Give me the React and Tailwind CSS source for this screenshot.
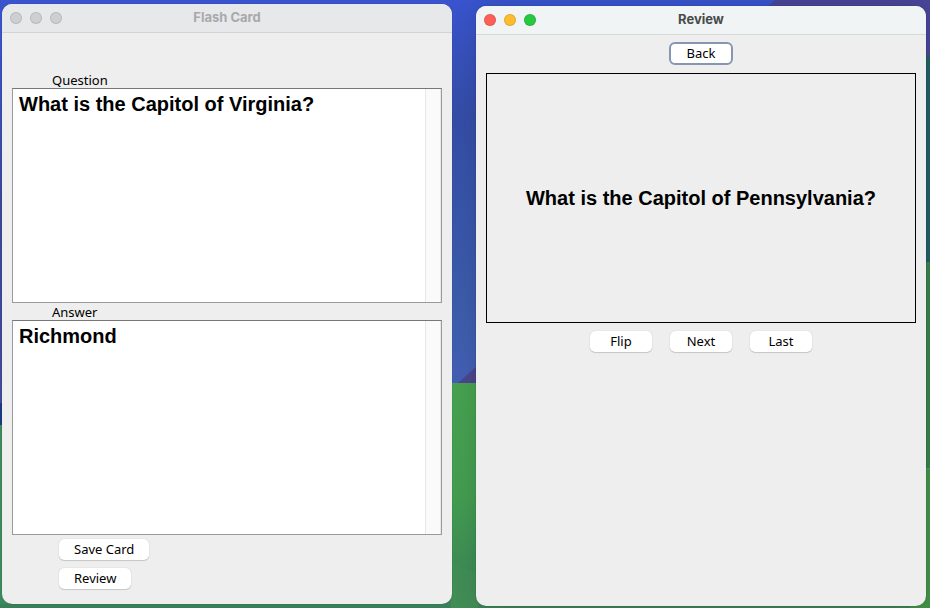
import React from "react";

function Wallpaper() {
  return (
    <svg
      aria-hidden="true"
      className="absolute inset-0 -z-10 h-full w-full"
      viewBox="0 0 930 608"
      preserveAspectRatio="none"
    >
      <defs>
        <linearGradient id="sky" x1="0" y1="0" x2="0" y2="1">
          <stop offset="0" stopColor="#3954ce" />
          <stop offset="0.3" stopColor="#344da6" />
          <stop offset="0.8" stopColor="#3c5caa" />
          <stop offset="1" stopColor="#435fb4" />
        </linearGradient>
        <linearGradient id="edge" x1="0" y1="0" x2="0" y2="1">
          <stop offset="0" stopColor="#3954ce" />
          <stop offset="0.5" stopColor="#3a479b" />
          <stop offset="1" stopColor="#45499a" />
        </linearGradient>
        <linearGradient id="grass" x1="0" y1="0" x2="0" y2="1">
          <stop offset="0" stopColor="#46a150" />
          <stop offset="0.5" stopColor="#439c50" />
          <stop offset="1" stopColor="#3b8257" />
        </linearGradient>
      </defs>
      <rect width="930" height="383" fill="url(#sky)" />
      <rect y="10" width="20" height="393" fill="url(#edge)" />
      <path d="M0 403H20V425H0Z" fill="#1b3a82" />
      <path d="M775 0H930V56H715Z" fill="#494598" />
      <path d="M458 383L477 366V383Z" fill="#4b458c" />
      <rect x="20" y="383" width="910" height="225" fill="url(#grass)" />
      <rect y="425" width="20" height="183" fill="#3b8a5d" />
      <path d="M451 562L478 574V608H451Z" fill="#418d56" />
      <path d="M910 55H930V262H910Z" fill="#235f63" />
      <path d="M910 262H930V468H910Z" fill="#38804f" />
      <path d="M910 465L930 470V608H910Z" fill="#429148" />
      <path d="M0 604H450V608H0Z" fill="#38805a" />
    </svg>
  );
}

function TitleBar({ title, active }) {
  const tones = active
    ? ["bg-[#fe5f57]", "bg-[#febc2e]", "bg-[#28c840]"]
    : ["bg-[#cdcfd1]", "bg-[#cdcfd1]", "bg-[#cdcfd1]"];
  const names = ["Close", "Minimize", "Zoom"];
  return (
    <header
      className={
        active
          ? "grid h-[29px] shrink-0 grid-cols-[1fr_auto_1fr] items-center border-b border-[#d5dad9] bg-[#f0f4f5] px-2 text-[#484b49]"
          : "grid h-[29px] shrink-0 grid-cols-[1fr_auto_1fr] items-center border-b border-[#d2d3d4] bg-[#e7e8ea] px-2 text-[#a8a9aa]"
      }
    >
      <div className="flex gap-2">
        {names.map((name, i) => (
          <button
            key={name}
            type="button"
            aria-label={name}
            className={`size-3 rounded-full border border-black/10 ${tones[i]}`}
          />
        ))}
      </div>
      <h1 className="pb-0.5 font-[Inter,sans-serif] text-[13px] leading-4 font-bold">{title}</h1>
    </header>
  );
}

function PushButton({ children, focused }) {
  return (
    <button
      type="button"
      className={
        focused
          ? "h-[23px] min-w-16 rounded-md border-2 border-[#8796b0] bg-white px-3 pb-0.5 leading-4"
          : "h-[21px] min-w-[62px] rounded-[5px] bg-white px-[15px] pb-0.5 leading-4 shadow-[0_0_1px_rgba(0,0,0,0.25),0_1px_1px_rgba(0,0,0,0.15)]"
      }
    >
      {children}
    </button>
  );
}

function CardField({ id, label, value }) {
  return (
    <div>
      <label htmlFor={id} className="block h-[17px] pl-10 leading-[18px]">
        {label}
      </label>
      <div className="flex h-[215px] border border-[#9a9a9a] border-t-[#777777] bg-white">
        <textarea
          id={id}
          defaultValue={value}
          className="min-w-0 flex-1 resize-none overflow-hidden px-1.5 py-[3px] font-['Liberation_Sans',Arial,sans-serif] text-xl leading-6 font-bold outline-none"
        />
        <div className="w-4 border-x border-[#e8e8e8] bg-[#fafafa]" />
      </div>
    </div>
  );
}

export default function App() {
  return (
    <main className="relative isolate flex min-h-screen items-start gap-6 overflow-hidden pt-1 pr-1 pl-0.5 font-['Noto_Sans','Open_Sans',sans-serif] text-[13px] text-black">
      <Wallpaper />
      <section className="flex min-h-[600px] min-w-0 flex-1 flex-col overflow-hidden rounded-[10px] bg-[#eeeeee] shadow-[0_0_1px_rgba(0,0,0,0.5)]">
        <TitleBar title="Flash Card" />
        <form className="flex flex-col px-2.5 pt-[38px]">
          <CardField id="question" label="Question" value="What is the Capitol of Virginia?" />
          <CardField id="answer" label="Answer" value="Richmond" />
          <div className="flex flex-col items-start gap-2 pt-1 pl-[47px]">
            <PushButton>Save Card</PushButton>
            <PushButton>Review</PushButton>
          </div>
        </form>
      </section>
      <section className="mt-0.5 flex min-h-[600px] min-w-0 flex-1 flex-col overflow-hidden rounded-[10px] bg-[#eeeeee] shadow-[0_0_1px_rgba(0,0,0,0.5),0_0_24px_rgba(0,0,0,0.12)]">
        <TitleBar title="Review" active />
        <div className="flex flex-col items-center gap-2 px-2.5 pt-[7px]">
          <PushButton focused>Back</PushButton>
          <div className="flex h-[250px] w-full items-center justify-center border border-black font-['Liberation_Sans',Arial,sans-serif] text-xl leading-6 font-bold">
            <p>What is the Capitol of Pennsylvania?</p>
          </div>
          <div className="flex gap-[18px]">
            <PushButton>Flip</PushButton>
            <PushButton>Next</PushButton>
            <PushButton>Last</PushButton>
          </div>
        </div>
      </section>
    </main>
  );
}
